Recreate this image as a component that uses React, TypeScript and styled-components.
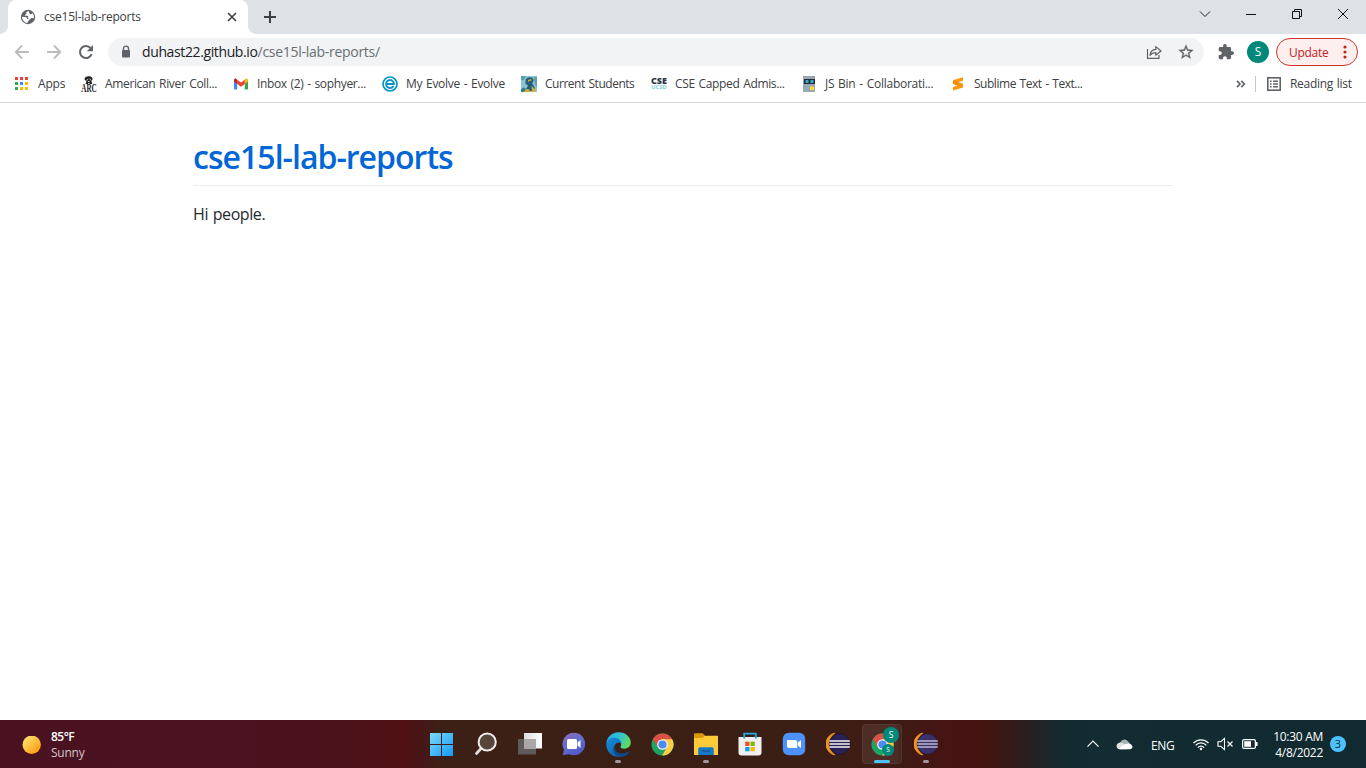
import React from 'react';
import styled, { createGlobalStyle } from 'styled-components';

const Global = createGlobalStyle`
  * { box-sizing: border-box; }
  html, body { margin: 0; padding: 0; overflow: hidden; }
  body { font-family: "Open Sans", "Noto Sans", sans-serif; background: #fff; }
  svg { display: block; flex: none; }
`;

const Screen = styled.div`
  width: 1366px;
  height: 768px;
  display: flex;
  flex-direction: column;
  overflow: hidden;
`;

const TabStrip = styled.header`
  height: 34px;
  flex: none;
  background: #dee1e6;
  display: flex;
  align-items: flex-start;
`;

const TabCurve = styled.div<{ $side: 'left' | 'right' }>`
  width: 8px;
  height: 34px;
  background: radial-gradient(circle at ${p => (p.$side === 'left' ? '0' : '100%')} 0, #dee1e6 7.5px, #fff 8.2px) 0 26px / 8px 8px no-repeat;
`;

const Tab = styled.div`
  width: 240px;
  height: 34px;
  background: #fff;
  border-radius: 8px 8px 0 0;
  display: flex;
  align-items: center;
  padding: 0 9px 0 12px;
`;

const TabTitle = styled.div`
  flex: 1;
  margin-left: 8px;
  font-size: 12px;
  line-height: 16px;
  color: #3c4043;
  letter-spacing: -0.22px;
  white-space: nowrap;
`;

const NewTab = styled.div`
  padding: 11px 0 0 8px;
`;

const WindowControls = styled.div`
  margin-left: auto;
  display: flex;
  height: 28px;
  align-items: center;
`;

const Control = styled.div`
  width: 46px;
  display: flex;
  justify-content: center;
`;

const Toolbar = styled.div`
  height: 36px;
  flex: none;
  display: flex;
  align-items: center;
  padding: 0 8px 0 14px;
`;

const NavIcons = styled.div`
  display: flex;
  gap: 16px;
  margin-right: 14px;
`;

const AddressBar = styled.div`
  width: 1096px;
  height: 28px;
  border-radius: 14px;
  background: #f1f3f4;
  display: flex;
  align-items: center;
  padding: 0 10px 0 12px;
`;

const Url = styled.div`
  flex: 1;
  margin-left: 10px;
  font-size: 14px;
  line-height: 20px;
  letter-spacing: -0.38px;
  color: #202124;
  white-space: nowrap;
`;

const UrlPath = styled.span`
  color: #6a6e72;
  letter-spacing: -0.28px;
`;

const AddressActions = styled.div`
  display: flex;
  gap: 16px;
`;

const Avatar = styled.div<{ $size: number }>`
  width: ${p => p.$size}px;
  height: ${p => p.$size}px;
  border-radius: 50%;
  background: #00897b;
  color: #fff;
  font-size: ${p => p.$size * 0.54}px;
  line-height: 1;
  display: flex;
  align-items: center;
  justify-content: center;
  flex: none;
`;

const ProfileGroup = styled.div`
  display: flex;
  align-items: center;
  gap: 13px;
  margin: 0 7px 0 14px;
`;

const UpdateButton = styled.div`
  width: 82px;
  height: 28px;
  border: 1px solid #d0342b;
  border-radius: 14px;
  background: #fcefee;
  color: #c5221f;
  display: flex;
  align-items: center;
  justify-content: space-between;
  padding: 0 10.5px 0 12px;
  font-size: 12px;
  letter-spacing: -0.3px;
`;

const BookmarkBar = styled.nav`
  height: 33px;
  flex: none;
  display: flex;
  align-items: center;
  padding: 0 14px 4px 14px;
  border-bottom: 1px solid #d9dbde;
`;

const Bookmark = styled.div<{ $width: number }>`
  width: ${p => p.$width}px;
  display: flex;
  align-items: center;
  gap: 8px;
`;

const Label = styled.span<{ $track?: number }>`
  font-size: 12px;
  line-height: 16px;
  color: #3c4043;
  letter-spacing: ${p => p.$track ?? -0.35}px;
  word-spacing: 1px;
  white-space: nowrap;
`;

const BookmarkEnd = styled.div`
  margin-left: auto;
  display: flex;
  align-items: center;
`;

const Divider = styled.div`
  width: 1px;
  height: 16px;
  background: #c6c9cd;
  margin: 0 11px 0 9px;
`;

const ReadingList = styled.div`
  width: 85px;
  display: flex;
  align-items: center;
  gap: 9px;
`;

const Page = styled.main`
  flex: 1;
  padding: 32px 193px;
`;

const Heading = styled.h1`
  margin: 0 0 16px;
  height: 51px;
  border-bottom: 1px solid #eaecef;
  font-size: 32px;
  line-height: 44px;
  font-weight: 600;
  letter-spacing: -0.97px;
  color: #0366d6;
`;

const Paragraph = styled.p`
  margin: 0;
  font-size: 16px;
  line-height: 24px;
  letter-spacing: -0.42px;
  word-spacing: 1px;
  color: #24292e;
`;

const Taskbar = styled.footer`
  height: 48px;
  flex: none;
  display: flex;
  align-items: center;
  background: linear-gradient(90deg, #4a1220 0, #4b1220 220px, #4a111b 330px, #501013 405px, #45171440 425px, #3c2015 438px, #3b1f14 800px, #3f1b14 900px, #471313 955px, #44130f 985px, #2e1c1c 1020px, #142a2f 1062px, #122c31 1090px, #112a2f 1366px), #45171a;
`;

const Weather = styled.div`
  width: 420px;
  display: flex;
  align-items: center;
  gap: 10px;
  padding: 2px 0 0 22px;
`;

const WeatherText = styled.div`
  color: #fff;
  font-size: 12px;
  line-height: 16px;
  letter-spacing: -0.25px;
`;

const Temperature = styled.div`
  font-weight: 600;
  letter-spacing: -0.5px;
`;

const Condition = styled.div`
  color: #d3c4c8;
`;

const Apps = styled.div`
  display: flex;
`;

const AppSlot = styled.div<{ $active?: boolean }>`
  position: relative;
  width: 40px;
  height: 40px;
  margin: 0 2px;
  border-radius: 4px;
  display: flex;
  align-items: center;
  justify-content: center;
  background: ${p => (p.$active ? 'rgba(255,255,255,.08)' : 'none')};
  box-shadow: ${p => (p.$active ? 'inset 0 0 0 1px rgba(255,255,255,.06), inset -4px 0 0 rgba(0,0,0,.08)' : 'none')};
`;

const Indicator = styled.div<{ $active?: boolean }>`
  position: absolute;
  bottom: 1px;
  left: ${p => (p.$active ? 12 : 17)}px;
  width: ${p => (p.$active ? 16 : 6)}px;
  height: 3px;
  border-radius: 2px;
  background: ${p => (p.$active ? '#4cc2ff' : '#a4969a')};
`;

const Badge = styled.div<{ $top: number; $left: number }>`
  position: absolute;
  top: ${p => p.$top}px;
  left: ${p => p.$left}px;
`;

const Tray = styled.div`
  margin-left: auto;
  display: flex;
  align-items: center;
  padding-right: 20px;
  color: #fff;
  font-size: 12px;
`;

const Overflow = styled.div`
  margin-right: 17px;
`;

const Language = styled.div`
  margin: 2px 17px 0 18px;
  width: 25px;
  letter-spacing: -0.35px;
`;

const Status = styled.div`
  display: flex;
  align-items: center;
  gap: 8px;
`;

const Clock = styled.div`
  width: 60px;
  margin: 1px 0 0 5px;
  text-align: right;
  line-height: 16px;
  letter-spacing: -0.28px;
  white-space: nowrap;
`;

const Count = styled.div`
  width: 16px;
  height: 16px;
  margin-left: 7px;
  border-radius: 50%;
  background: #4cc2ff;
  color: #12262e;
  font-size: 11px;
  line-height: 16px;
  text-align: center;
`;

const GlobeIcon = () => (
  <svg width="16" height="16" viewBox="0 0 16 16">
    <circle cx="8" cy="8" r="7.2" fill="#5f6368" />
    <path d="M8.800 2C7.800 2 7 2.700 6.200 3.600c-.5.600.6.900.3 1.500-.4.700-1.500.5-1.700 1.200-.1.600 1 .4 2.200.4 1.500.2 1.600 1 1 1.900h-.9C6.600 7.800 4.800 8 2 7.700a6 6 0 0 0 5.500 6.200c-.3-1.200 1.400-1.500 1.300-2.700 0-.9 1.600-.5 1.800-1.400.1-.9 1.200-.9 2.300-.6l.9.100c.5-2.200-.3-4-1.300-5.200-.6.900-1 1.400-2 1.100-.8-.3-1.700-1.600-1.700-3.200Z" fill="#fff" />
    <path d="M8.200 8.600h-2c.5 1 1 1.600 2.300 1.500z" fill="#5f6368" />
  </svg>
);

const CloseTab = () => (
  <svg width="14" height="14" viewBox="0 0 14 14" stroke="#3c4043" strokeWidth="1.6"><path d="M3 3l8 8M11 3l-8 8" /></svg>
);
const Plus = () => (
  <svg width="12" height="12" viewBox="0 0 12 12" stroke="#3c4043" strokeWidth="2"><path d="M6 0v12M0 6h12" /></svg>
);

const Arrow = ({ flip }: { flip?: boolean }) => (
  <svg width="16" height="16" viewBox="0 0 16 16" fill="none" stroke="#babcbe" strokeWidth="1.8">
    <path d={flip ? 'M1 8h13M8 1.500L14.300 8 8 14.500' : 'M15 8H2M8 1.500L1.700 8 8 14.500'} />
  </svg>
);
const Reload = () => (
  <svg width="16" height="16" viewBox="0 0 16 16">
    <path d="M13.600 10.200A6 6 0 1 1 12.600 4.200" fill="none" stroke="#5f6368" strokeWidth="2" />
    <path d="M15 1v6.200H8.800z" fill="#5f6368" />
  </svg>
);
const Lock = () => (
  <svg width="12" height="14" viewBox="0 0 12 14">
    <path d="M3.500 6V3.600a2.500 2.500 0 0 1 5 0V6" fill="none" stroke="#5f6368" strokeWidth="1.400" />
    <rect x="2" y="5" width="8" height="7.500" rx="1" fill="#5f6368" />
  </svg>
);
const Share = () => (
  <svg width="16" height="16" viewBox="0 0 16 16" fill="none" stroke="#5f6368" strokeWidth="1.200" strokeLinejoin="round">
    <path d="M1.500 5v9.400h11.500V11" />
    <path d="M4 11.300C4.400 7.500 6.600 5.600 9.800 5.400V2.600L15 7l-5.200 4.200V8.600C7.400 8.600 5.500 9.300 4 11.300Z" />
  </svg>
);
const Star = () => (
  <svg width="16" height="16" viewBox="0 0 24 24" fill="#5f6368">
    <path d="M22 9.240l-7.190-.620L12 2 9.190 8.630 2 9.240l5.460 4.730L5.820 21 12 17.270 18.180 21l-1.630-7.030L22 9.240zM12 15.400l-3.760 2.270 1-4.280-3.320-2.880 4.380-.380L12 6.100l1.710 4.040 4.380.380-3.320 2.880 1 4.280L12 15.400z" stroke="#5f6368" strokeWidth=".4" transform="translate(-1.200 -1.200) scale(1.100)" />
  </svg>
);
const Puzzle = () => (
  <svg width="16" height="16" viewBox="1 1 22 22" fill="#5f6368">
    <path d="M20.500 11H19V7c0-1.100-.9-2-2-2h-4V3.500a2.500 2.500 0 0 0-5 0V5H4c-1.100 0-2 .9-2 2v3.800h1.500a2.700 2.700 0 0 1 0 5.400H2V20c0 1.100.9 2 2 2h3.800v-1.500a2.700 2.700 0 0 1 5.400 0V22H17c1.100 0 2-.9 2-2v-4h1.500a2.500 2.500 0 0 0 0-5z" />
  </svg>
);
const Dots = () => (
  <svg width="4" height="14" viewBox="0 0 4 14" fill="#c5221f"><circle cx="2" cy="2" r="1.600" /><circle cx="2" cy="7" r="1.600" /><circle cx="2" cy="12" r="1.600" /></svg>
);

const AppsGrid = () => {
  const colors = ['#ea4335', '#ea4335', '#ea4335', '#34a853', '#4285f4', '#fbbc04', '#34a853', '#fbbc04', '#fbbc04'];
  return (
    <svg width="16" height="16" viewBox="0 0 16 16">
      {colors.map((c, i) => <rect key={i} x={1 + (i % 3) * 5} y={1 + Math.floor(i / 3) * 5} width="3" height="3" fill={c} />)}
    </svg>
  );
};
const ArcLogo = () => (
  <svg width="16" height="17" viewBox="0 0 16 17">
    <path d="M3.500 3.500C3.500 1.200 5.500.4 7.500.3c2.500-.3 4.300 1.200 4 3.400L10.300 5l1 3H4.500l1-2.500Z" fill="#222" />
    <path d="M5.500 4.300l1.700-1M8.500 3l1.700 1.300M7 5.500h1.600M7 7.500h1.500" stroke="#fff" strokeWidth=".8" />
    <text x=".2" y="15.500" fontFamily="Liberation Serif" fontWeight="700" fontSize="11.500" textLength="15.600" lengthAdjust="spacingAndGlyphs" fill="#222">ARC</text>
  </svg>
);
const Gmail = () => (
  <svg width="16" height="16" viewBox="0 0 16 16">
    <path d="M1 4v8.500c0 .6.400 1 1 1h2.200V6.500z" fill="#4285f4" />
    <path d="M15 4v8.500c0 .6-.400 1-1 1h-2.200V6.500z" fill="#34a853" />
    <path d="M11.800 3.900V8L15 5.600V4.200c0-1.600-1.700-2.200-2.700-1.400z" fill="#fbbc04" />
    <path d="M4.200 8V3.700L8 6.600l3.800-2.900V8L8 10.800z" fill="#ea4335" />
    <path d="M1 4.200v1.400L4.200 8V3.700l-.8-.8C2.400 2.200 1 2.800 1 4.200z" fill="#c5221f" />
  </svg>
);
const Evolve = () => (
  <svg width="16" height="16" viewBox="0 0 16 16" fill="none" stroke="#0a93c4">
    <circle cx="8" cy="8" r="7" strokeWidth="1.700" />
    <path d="M11.500 10A4 4 0 1 1 12 7.900H4.200" strokeWidth="1.900" />
    <path d="M4.300 8H12" strokeWidth="2" />
  </svg>
);
const Students = () => (
  <svg width="16" height="16" viewBox="0 0 16 16">
    <rect width="16" height="16" fill="#8fc3d0" />
    <path d="M0 0h5L3 4H0zM13 1h3v10l-2-2z" fill="#5c9eb4" />
    <path d="M4.500 4c.5-2.500 5.500-4 7.500-1.500 1.300 1.500.5 3.500-.8 4.500l2.800 5v3H4l3-5.500L4.500 8z" fill="#24607c" />
    <path d="M7 4l3-1 1 1.200-3 .8-1 1.500zM3 16c.5-2.500 3-3.500 5-2.500l1.500 2.500zM10.500 10l3.500 3v3h-3z" fill="#d8ad21" />
    <path d="M0 13l3-1.500L5 13l-2 3H0z" fill="#337c95" />
  </svg>
);
const Cse = () => (
  <svg width="16" height="16" viewBox="0 0 16 16" fontFamily="Open Sans" fontWeight="800">
    <text x="0" y="7.800" fontSize="8.500" textLength="16" lengthAdjust="spacingAndGlyphs" fill="#283546">CSE</text>
    <text x="0" y="13" fontSize="6" fontWeight="700" textLength="16" lengthAdjust="spacingAndGlyphs" fill="#82d2df">UCSD</text>
  </svg>
);
const JsBin = () => (
  <svg width="16" height="16" viewBox="0 0 16 16">
    <rect x="2" width="12" height="16" fill="#9aa7b1" />
    <rect x="3" y="3" width="11" height="5" fill="#202d38" />
    <rect x="4.500" y="4" width="3" height="3" fill="#35a8c9" /><rect x="9.500" y="4" width="3" height="3" fill="#35a8c9" />
    <rect x="9" y="10.500" width="4" height="3.500" fill="#f4dc42" />
  </svg>
);
const Sublime = () => (
  <svg width="16" height="16" viewBox="0 0 16 16" fill="#ff9800">
    <path d="M3 4.300L13 1.200v3.600L3 8z" /><path d="M3 4.500l10 3.300v3.700L3 8z" fill="#f28a00" /><path d="M3 11l10-3.200v3.700L3 14.500z" />
  </svg>
);
const Chevrons = () => (
  <svg width="10" height="8" viewBox="0 0 10 8" fill="none" stroke="#5f6368" strokeWidth="1.700"><path d="M1 .8L4 4 1 7.200M5.300.8l3 3.200-3 3.200" /></svg>
);
const ReadingIcon = () => (
  <svg width="14" height="14" viewBox="0 0 14 14">
    <rect x=".8" y=".8" width="12.400" height="12.400" fill="none" stroke="#5f6368" strokeWidth="1.600" />
    <path d="M3 4.200h1.600M3 7h1.600M3 9.800h1.600M6 4.200h5M6 7h5M6 9.800h5" stroke="#5f6368" strokeWidth="1.400" />
  </svg>
);

const Sun = () => (
  <svg width="19" height="19" viewBox="0 0 19 19">
    <defs><linearGradient id="sun" x1="0" y1="0" x2="1" y2="1"><stop offset=".1" stopColor="#ffe372" /><stop offset=".95" stopColor="#fb9404" /></linearGradient></defs>
    <circle cx="9.700" cy="8.700" r="9.200" fill="url(#sun)" />
  </svg>
);
const Windows = () => (
  <svg width="24" height="24" viewBox="0 0 24 24">
    <defs><linearGradient id="win" gradientUnits="userSpaceOnUse" x1="0" y1="0" x2="24" y2="24"><stop stopColor="#7fdcfb" /><stop offset="1" stopColor="#1098f7" /></linearGradient></defs>
    <path d="M0 1h11v11H0zM12 1h11v11H12zM0 13h11v11H0zM12 13h11v11H12z" fill="url(#win)" />
  </svg>
);
const Search = () => (
  <svg width="24" height="24" viewBox="0 0 24 24">
    <path d="M2.500 21.500l5.500-6" stroke="#dedbd9" strokeWidth="2.800" strokeLinecap="round" />
    <circle cx="13.200" cy="10" r="8.600" fill="#57453b" stroke="#eeecea" strokeWidth="2" />
  </svg>
);
const TaskView = () => (
  <svg width="24" height="24" viewBox="0 0 24 24">
    <defs><linearGradient id="tv"><stop stopColor="#ddd" /><stop offset="1" stopColor="#fff" /></linearGradient></defs>
    <rect x="0" y="7" width="18" height="15.500" fill="#5f5b5a" />
    <rect x="6" y="1" width="18" height="15.500" fill="url(#tv)" />
    <rect x="6" y="7" width="12" height="9.500" fill="#aaa7a6" />
  </svg>
);
const Chat = () => (
  <svg width="24" height="24" viewBox="0 0 24 24">
    <defs><linearGradient id="chat" x1="0" y1="0" x2=".6" y2="1"><stop stopColor="#9366b2" /><stop offset=".5" stopColor="#6270cf" /><stop offset="1" stopColor="#5059c9" /></linearGradient></defs>
    <path d="M12 .7A11.300 11.300 0 1 1 7 22.200L.8 23l1.200-5.400A11.300 11.300 0 0 1 12 .7Z" fill="url(#chat)" />
    <rect x="5" y="7" width="10" height="10" rx="1.500" fill="#fff" /><path d="M15.500 10.500L18.500 8v8l-3-2.500z" fill="#fff" />
  </svg>
);
const Edge = () => (
  <svg width="25" height="25" viewBox="0 0 24 24">
    <defs>
      <linearGradient id="e1" x1="0" y1=".2" x2="1" y2=".6"><stop stopColor="#2aa9e6" /><stop offset=".5" stopColor="#2fc5cf" /><stop offset="1" stopColor="#62dc55" /></linearGradient>
      <linearGradient id="e2" x1="0" y1="0" x2="1" y2="1"><stop stopColor="#168ee0" /><stop offset="1" stopColor="#0b59a4" /></linearGradient>
    </defs>
    <path d="M.4 10.500C1.200 4.300 6 .2 12.200.2 19 .2 23.800 5 23.800 10c0 4-3.100 6-6.500 6-2.200 0-4-.8-3.300-2 1.200-2.200.2-5.500-3.600-5.900z" fill="url(#e1)" />
    <path d="M.3 12C.5 8 4 5.600 7.400 5.600c4.300 0 7.500 2.500 7.500 6-2.500-3-7-.6-7 3.400 0 4.500 5 8 10.500 6.500-2 1.600-4.300 2.300-6.700 2.300C5 23.800.2 18 .3 12Z" fill="url(#e2)" />
    <path d="M9.300 11.600c-2.800 4 .3 9.200 5.800 9 3 0 4.900-1.200 6.400-2 .6-.3 1.200.1.700.8C20 22.600 17 24 14 23.800c-5.500.2-10-7.700-4.700-12.200z" fill="#0c4c8e" />
  </svg>
);
const Chrome = () => (
  <svg width="23" height="23" viewBox="0 0 24 24">
    <circle cx="12" cy="12" r="11.500" fill="#1da462" />
    <path d="M12 12L2 6.300A11.500 11.500 0 0 1 22 6.300V7z" fill="#dd5144" />
    <path d="M12 6.500h10.100A11.500 11.500 0 0 1 11.600 23.500L16.700 14.800z" fill="#ffcd46" />
    <path d="M2 6.300L7.200 15 12 6.500z" fill="#dd5144" />
    <circle cx="12" cy="12" r="5.600" fill="#f5f5f5" /><circle cx="12" cy="12" r="4.300" fill="#4c8bf5" />
  </svg>
);
const Folder = () => (
  <svg width="24" height="24" viewBox="0 0 24 24">
    <path d="M0 6V2.500c0-.8.500-1.300 1.300-1.300h7.200L11 3.500v4H0z" fill="#d99a05" />
    <path d="M0 6h8.500L11 3.800h12c.6 0 1 .4 1 1V23H0z" fill="#fecb38" />
    <path d="M4.200 23v-6c0-1 .8-1.700 1.700-1.700h12.200c1 0 1.700.7 1.700 1.700v6z" fill="#1778c6" />
    <path d="M8 19h8" stroke="#0b559a" strokeWidth="1.200" />
  </svg>
);
const Store = () => (
  <svg width="24" height="24" viewBox="0 0 24 24">
    <path d="M6.200 6V1.700h11.600V6" fill="none" stroke="#27a9e8" strokeWidth="1.800" />
    <path d="M.5 5h23v15.500a3 3 0 0 1-3 3h-17a3 3 0 0 1-3-3z" fill="#f0f0f1" />
    <path d="M6.200 5v1.500M17.800 5v1.500" stroke="#1795d4" strokeWidth="1.800" />
    <path d="M7.200 9.700h4.300V14H7.200z" fill="#f25022" /><path d="M12.500 9.700h4.300V14h-4.300z" fill="#7fba00" />
    <path d="M7.200 15h4.300v4.300H7.200z" fill="#00a4ef" /><path d="M12.500 15h4.300v4.300h-4.300z" fill="#ffb900" />
  </svg>
);
const Zoom = () => (
  <svg width="24" height="24" viewBox="0 0 24 24">
    <rect x=".8" y=".8" width="22.400" height="22.400" rx="6" fill="#4d92fa" />
    <path d="M5 8h8.200c1.200 0 2 .8 2 2v6H7c-1.200 0-2-.8-2-2zM15.800 10.500L19 8v8l-3.200-2.500z" fill="#fff" />
  </svg>
);
const Eclipse = ({ light }: { light?: boolean }) => (
  <svg width="24" height="24" viewBox="0 0 24 24">
    <path d="M9 1A11.200 11.200 0 0 0 9 23 13 13 0 0 1 9 1Z" fill="#f7941e" stroke="#f7941e" strokeWidth=".8" />
    <circle cx="13.500" cy="12" r="10.400" fill={light ? '#3a306b' : '#2a2156'} stroke="#1f1526" strokeWidth=".7" />
    <path d="M3.300 9h20.500M3.300 12h20.500M3.300 15h20.500" stroke={light ? '#bab7cc' : '#f3f2f6'} strokeWidth="1.600" />
  </svg>
);

const CaretUp = () => (
  <svg width="12" height="8" viewBox="0 0 12 8" fill="none" stroke="#fff" strokeWidth="1.200"><path d="M.5 6.700L6 1.200l5.500 5.500" /></svg>
);
const Cloud = () => (
  <svg width="17" height="12" viewBox="0 0 17 12">
    <path d="M4.300 6A4.300 4.300 0 0 1 12 3.200L15 7l-8 1z" fill="#a9b1b3" />
    <path d="M.5 7.800A3.700 3.700 0 0 1 5 4.600L13.500 8l-2.500 3.200H4A3.500 3.500 0 0 1 .5 7.800Z" fill="#dfe2e3" />
    <path d="M2 10.600L9.500 6c3-1.500 7 .2 7 2.700 0 1.500-1.300 2.500-2.700 2.500H4c-.8 0-1.500-.2-2-.6z" fill="#fff" />
  </svg>
);
const Wifi = () => (
  <svg width="16" height="13" viewBox="0 0 16 13" fill="none" stroke="#fff" strokeWidth="1.200">
    <path d="M.5 5c4.200-4.300 10.800-4.300 15 0M2.600 7.300c3-3.200 7.800-3.200 10.800 0M4.800 9.600c1.800-2 4.600-2 6.400 0" />
    <circle cx="8" cy="11" r="1.300" fill="#fff" stroke="none" />
  </svg>
);
const Muted = () => (
  <svg width="17" height="14" viewBox="0 0 17 14" fill="none" stroke="#fff" strokeWidth="1.100">
    <path d="M1 4.700h2.800L7.500 1.400v11.200L3.800 9.300H1z" /><path d="M10.500 4.500l5 5M15.500 4.500l-5 5" />
  </svg>
);
const Battery = () => (
  <svg width="16" height="10" viewBox="0 0 16 10">
    <rect x=".6" y=".6" width="12.800" height="8.800" rx="1.500" fill="none" stroke="#fff" strokeWidth="1.200" />
    <rect x="2.200" y="2.200" width="6.800" height="5.600" fill="#fff" /><path d="M14.800 3v4" stroke="#fff" strokeWidth="1.500" />
  </svg>
);

const bookmarks = [
  { text: 'Apps', width: 67, icon: <AppsGrid />, track: -0.2 },
  { text: 'American River Coll...', width: 152, icon: <ArcLogo />, track: -0.35 },
  { text: 'Inbox (2) - sophyer...', width: 149, icon: <Gmail />, track: -0.35 },
  { text: 'My Evolve - Evolve', width: 139, icon: <Evolve />, track: -0.3 },
  { text: 'Current Students', width: 130, icon: <Students />, track: -0.47 },
  { text: 'CSE Capped Admis...', width: 150, icon: <Cse />, track: -0.35 },
  { text: 'JS Bin - Collaborati...', width: 149, icon: <JsBin />, track: -0.27 },
  { text: 'Sublime Text - Text...', width: 149, icon: <Sublime />, track: -0.47 },
];

export default function App() {
  return (
    <Screen>
      <Global />
      <TabStrip>
        <TabCurve $side="left" />
        <Tab>
          <GlobeIcon />
          <TabTitle>cse15l-lab-reports</TabTitle>
          <CloseTab />
        </Tab>
        <TabCurve $side="right" />
        <NewTab><Plus /></NewTab>
        <WindowControls>
          <Control><svg width="12" height="8" viewBox="0 0 12 8" fill="none" stroke="#222" strokeWidth="1"><path d="M1 1.500l5 5 5-5" /></svg></Control>
          <Control><svg width="10" height="10" viewBox="0 0 10 10"><path d="M0 5.500h10" stroke="#111" /></svg></Control>
          <Control><svg width="10" height="10" viewBox="0 0 10 10" fill="none" stroke="#111"><path d="M.5 2.500h7v7h-7zM2.500 2.500v-2h7v7h-2" /></svg></Control>
          <Control><svg width="12" height="12" viewBox="0 0 12 12" stroke="#111"><path d="M1 1l10 10M11 1L1 11" /></svg></Control>
        </WindowControls>
      </TabStrip>
      <Toolbar>
        <NavIcons><Arrow /><Arrow flip /><Reload /></NavIcons>
        <AddressBar>
          <Lock />
          <Url>duhast22.github.io<UrlPath>/cse15l-lab-reports/</UrlPath></Url>
          <AddressActions><Share /><Star /></AddressActions>
        </AddressBar>
        <ProfileGroup><Puzzle /><Avatar $size={22}>S</Avatar></ProfileGroup>
        <UpdateButton>Update<Dots /></UpdateButton>
      </Toolbar>
      <BookmarkBar>
        {bookmarks.map(b => (
          <Bookmark key={b.text} $width={b.width}>{b.icon}<Label $track={b.track}>{b.text}</Label></Bookmark>
        ))}
        <BookmarkEnd>
          <Chevrons />
          <Divider />
          <ReadingList><ReadingIcon /><Label $track={-0.3}>Reading list</Label></ReadingList>
        </BookmarkEnd>
      </BookmarkBar>
      <Page>
        <Heading>cse15l-lab-reports</Heading>
        <Paragraph>Hi people.</Paragraph>
      </Page>
      <Taskbar>
        <Weather>
          <Sun />
          <WeatherText><Temperature>85°F</Temperature><Condition>Sunny</Condition></WeatherText>
        </Weather>
        <Apps>
          <AppSlot><Windows /></AppSlot>
          <AppSlot><Search /></AppSlot>
          <AppSlot><TaskView /></AppSlot>
          <AppSlot><Chat /></AppSlot>
          <AppSlot><Edge /><Indicator /></AppSlot>
          <AppSlot><Chrome /></AppSlot>
          <AppSlot><Folder /><Indicator /></AppSlot>
          <AppSlot><Store /></AppSlot>
          <AppSlot><Zoom /></AppSlot>
          <AppSlot><Eclipse /></AppSlot>
          <AppSlot $active>
            <Chrome />
            <Badge $top={3} $left={21}><Avatar $size={16}>S</Avatar></Badge>
            <Badge $top={20} $left={20}><Avatar $size={12}>S</Avatar></Badge>
            <Indicator $active />
          </AppSlot>
          <AppSlot><Eclipse light /><Indicator /></AppSlot>
        </Apps>
        <Tray>
          <Overflow><CaretUp /></Overflow>
          <Cloud />
          <Language>ENG</Language>
          <Status><Wifi /><Muted /><Battery /></Status>
          <Clock>10:30 AM<br />4/8/2022</Clock>
          <Count>3</Count>
        </Tray>
      </Taskbar>
    </Screen>
  );
}
